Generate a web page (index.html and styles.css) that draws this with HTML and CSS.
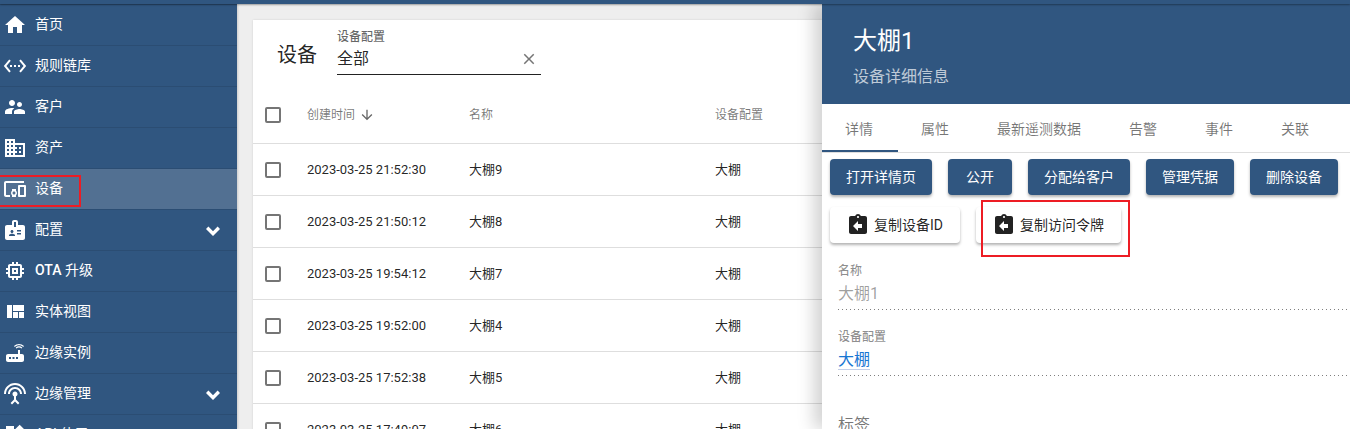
FILE: index.html
```html
<!DOCTYPE html>
<html lang="zh">
<head>
    <meta charset="UTF-8">
    <title>设备</title>
    <link rel="stylesheet" href="styles.css">
</head>
<body>
    <div class="topbar"></div>
    <div class="layout">
        <!-- Side menu -->
        <nav class="sidebar">
            <a class="nav-item"><svg class="nav-icon" viewBox="0 0 24 24"><path d="M10 20v-6h4v6h5v-8h3L12 3 2 12h3v8z"/></svg><span>首页</span></a>
            <a class="nav-item"><svg class="nav-icon" viewBox="0 0 24 24"><path d="M7.77 6.76L6.23 5.48.82 12l5.41 6.52 1.54-1.28L3.42 12l4.35-5.24zM7 13h2v-2H7v2zm10-2h-2v2h2v-2zm-6 2h2v-2h-2v2zm6.77-7.52l-1.54 1.28L20.58 12l-4.35 5.24 1.54 1.28L23.18 12l-5.41-6.52z"/></svg><span>规则链库</span></a>
            <a class="nav-item"><svg class="nav-icon" viewBox="0 0 24 24"><path d="M16.5 12c1.38 0 2.49-1.12 2.49-2.5S17.88 7 16.5 7 14 8.12 14 9.5s1.12 2.5 2.5 2.5zM9 11c1.66 0 2.99-1.34 2.99-3S10.66 5 9 5 6 6.34 6 8s1.34 3 3 3zm7.5 3c-1.83 0-5.5.92-5.5 2.75V19h11v-2.25c0-1.83-3.67-2.75-5.5-2.75zM9 13c-2.33 0-7 1.17-7 3.5V19h7v-2.25c0-.85.33-2.34 2.37-3.47C10.5 13.1 9.66 13 9 13z"/></svg><span>客户</span></a>
            <a class="nav-item"><svg class="nav-icon" viewBox="0 0 24 24"><path d="M12 7V3H2v18h20V7H12zM6 19H4v-2h2v2zm0-4H4v-2h2v2zm0-4H4V9h2v2zm0-4H4V5h2v2zm4 12H8v-2h2v2zm0-4H8v-2h2v2zm0-4H8V9h2v2zm0-4H8V5h2v2zm10 12h-8v-2h2v-2h-2v-2h2v-2h-2V9h8v10zm-2-8h-2v2h2v-2zm0 4h-2v2h2v-2z"/></svg><span>资产</span></a>
            <a class="nav-item active"><svg class="nav-icon" viewBox="0 0 24 24"><path d="M3 6h18V4H3c-1.1 0-2 .9-2 2v12c0 1.1.9 2 2 2h4v-2H3V6zm10 6H9v1.78c-.61.55-1 1.33-1 2.22s.39 1.67 1 2.22V20h4v-1.78c.61-.55 1-1.34 1-2.22s-.39-1.67-1-2.22V12zm-2 5.5c-.83 0-1.5-.67-1.5-1.5s.67-1.5 1.5-1.5 1.5.67 1.5 1.5-.67 1.5-1.5 1.5zM22 8h-6c-.5 0-1 .5-1 1v10c0 .5.5 1 1 1h6c.5 0 1-.5 1-1V9c0-.5-.5-1-1-1zm-1 10h-4v-8h4v8z"/></svg><span>设备</span></a>
            <a class="nav-item"><svg class="nav-icon" viewBox="0 0 24 24"><path d="M20 7h-5V4c0-1.1-.9-2-2-2h-2c-1.1 0-2 .9-2 2v3H4c-1.1 0-2 .9-2 2v11c0 1.1.9 2 2 2h16c1.1 0 2-.9 2-2V9c0-1.1-.9-2-2-2zM9 12c.83 0 1.5.67 1.5 1.5S9.83 15 9 15s-1.5-.67-1.5-1.5S8.17 12 9 12zm3 6H6v-.75c0-1 2-1.5 3-1.5s3 .5 3 1.5V18zm1-9h-2V4h2v5zm5 7.5h-4V15h4v1.5zm0-3h-4V12h4v1.5z"/></svg><span>配置</span><svg class="nav-chevron" viewBox="0 0 24 24"><path d="M7.41 8.59L12 13.17l4.59-4.58L19 11l-7 7-7-7z"/></svg></a>
            <a class="nav-item"><svg class="nav-icon" viewBox="0 0 24 24"><path d="M15 9H9v6h6V9zm-2 4h-2v-2h2v2zm8-2V9h-2V7c0-1.1-.9-2-2-2h-2V3h-2v2h-2V3H9v2H7c-1.1 0-2 .9-2 2v2H3v2h2v2H3v2h2v2c0 1.1.9 2 2 2h2v2h2v-2h2v2h2v-2h2c1.1 0 2-.9 2-2v-2h2v-2h-2v-2h2zm-4 6H7V7h10v10z"/></svg><span><b class="latin">OTA</b> 升级</span></a>
            <a class="nav-item"><svg class="nav-icon" viewBox="0 0 24 24"><path d="M10 18h5v-6h-5v6zm-6 0h5V5H4v13zm12 0h5v-6h-5v6zM10 5v6h11V5H10z"/></svg><span>实体视图</span></a>
            <a class="nav-item"><svg class="nav-icon" viewBox="0 0 24 24"><path d="M20.2 5.9l.8-.8C19.6 3.7 17.8 3 16 3s-3.6.7-5 2.1l.8.8C13 4.8 14.5 4.2 16 4.2s3 .6 4.2 1.7zm-.9.8c-.9-.9-2.1-1.4-3.3-1.4s-2.4.5-3.3 1.4l.8.8c.7-.7 1.6-1 2.5-1 .9 0 1.8.3 2.5 1l.8-.8zM19 13h-2V9h-2v4H5c-1.1 0-2 .9-2 2v4c0 1.1.9 2 2 2h14c1.1 0 2-.9 2-2v-4c0-1.1-.9-2-2-2zM8 18H6v-2h2v2zm3.5 0h-2v-2h2v2zm3.5 0h-2v-2h2v2z"/></svg><span>边缘实例</span></a>
            <a class="nav-item"><svg class="nav-icon" viewBox="0 0 24 24"><path d="M12 5c-3.87 0-7 3.13-7 7h2c0-2.76 2.24-5 5-5s5 2.24 5 5h2c0-3.87-3.13-7-7-7zm1 9.29c.88-.39 1.5-1.26 1.5-2.29 0-1.38-1.12-2.5-2.5-2.5S9.5 10.62 9.5 12c0 1.02.62 1.9 1.5 2.29v3.3L7.59 21 9 22.41l3-3 3 3L16.41 21 13 17.59v-3.3zM12 1C5.93 1 1 5.93 1 12h2c0-4.97 4.03-9 9-9s9 4.03 9 9h2c0-6.07-4.93-11-11-11z"/></svg><span>边缘管理</span><svg class="nav-chevron" viewBox="0 0 24 24"><path d="M7.41 8.59L12 13.17l4.59-4.58L19 11l-7 7-7-7z"/></svg></a>
            <a class="nav-item"><svg class="nav-icon" viewBox="0 0 24 24"><path d="M13 13v8h8v-8h-8zM3 21h8v-8H3v8zM3 3v8h8V3H3zm13.66-1.31L11 7.34 16.66 13l5.66-5.66-5.66-5.65z"/></svg><span>API 使用</span></a>
        </nav>

        <!-- Device table -->
        <main class="content">
            <section class="card">
                <div class="card-head">
                    <h2 class="card-title">设备</h2>
                    <div class="filter">
                        <label class="filter-label">设备配置</label>
                        <div class="filter-value">
                            <span>全部</span>
                            <svg class="filter-clear" viewBox="0 0 24 24"><path d="M19 6.41L17.59 5 12 10.59 6.41 5 5 6.41 10.59 12 5 17.59 6.41 19 12 13.41 17.59 19 19 17.59 13.41 12z"/></svg>
                        </div>
                    </div>
                </div>
                <div class="row row-head">
                    <span class="check"></span>
                    <span class="col-time">创建时间<svg class="sort-icon" viewBox="0 0 24 24"><path d="M20 12l-1.41-1.41L13 16.17V4h-2v12.17l-5.58-5.59L4 12l8 8 8-8z"/></svg></span>
                    <span class="col-name">名称</span>
                    <span class="col-profile">设备配置</span>
                </div>
                <div class="row"><span class="check"></span><span class="col-time">2023-03-25 21:52:30</span><span class="col-name">大棚9</span><span class="col-profile">大棚</span></div>
                <div class="row"><span class="check"></span><span class="col-time">2023-03-25 21:50:12</span><span class="col-name">大棚8</span><span class="col-profile">大棚</span></div>
                <div class="row"><span class="check"></span><span class="col-time">2023-03-25 19:54:12</span><span class="col-name">大棚7</span><span class="col-profile">大棚</span></div>
                <div class="row"><span class="check"></span><span class="col-time">2023-03-25 19:52:00</span><span class="col-name">大棚4</span><span class="col-profile">大棚</span></div>
                <div class="row"><span class="check"></span><span class="col-time">2023-03-25 17:52:38</span><span class="col-name">大棚5</span><span class="col-profile">大棚</span></div>
                <div class="row"><span class="check"></span><span class="col-time">2023-03-25 17:49:07</span><span class="col-name">大棚6</span><span class="col-profile">大棚</span></div>
            </section>
        </main>

        <!-- Device details drawer -->
        <aside class="details">
            <header class="details-head">
                <h1 class="details-title">大棚1</h1>
                <p class="details-sub">设备详细信息</p>
            </header>
            <div class="tabs">
                <span class="tab selected">详情</span>
                <span class="tab">属性</span>
                <span class="tab tab-wide">最新遥测数据</span>
                <span class="tab">告警</span>
                <span class="tab">事件</span>
                <span class="tab">关联</span>
            </div>
            <div class="actions">
                <button class="btn">打开详情页</button>
                <button class="btn">公开</button>
                <button class="btn">分配给客户</button>
                <button class="btn">管理凭据</button>
                <button class="btn">删除设备</button>
            </div>
            <div class="actions actions-copy">
                <button class="btn btn-light"><svg class="btn-icon" viewBox="0 0 24 24"><path d="M19 3h-4.18C14.4 1.84 13.3 1 12 1c-1.3 0-2.4.84-2.82 2H5c-1.1 0-2 .9-2 2v14c0 1.1.9 2 2 2h14c1.1 0 2-.9 2-2V5c0-1.1-.9-2-2-2zm-7 0c.55 0 1 .45 1 1s-.45 1-1 1-1-.45-1-1 .45-1 1-1zm4 12h-4v3l-5-5 5-5v3h4v4z"/></svg>复制设备ID</button>
                <button class="btn btn-light"><svg class="btn-icon" viewBox="0 0 24 24"><path d="M19 3h-4.18C14.4 1.84 13.3 1 12 1c-1.3 0-2.4.84-2.82 2H5c-1.1 0-2 .9-2 2v14c0 1.1.9 2 2 2h14c1.1 0 2-.9 2-2V5c0-1.1-.9-2-2-2zm-7 0c.55 0 1 .45 1 1s-.45 1-1 1-1-.45-1-1 .45-1 1-1zm4 12h-4v3l-5-5 5-5v3h4v4z"/></svg>复制访问令牌</button>
            </div>
            <div class="fields">
                <div class="field">
                    <div class="field-label">名称</div>
                    <div class="field-value">大棚1</div>
                </div>
                <div class="field">
                    <div class="field-label">设备配置</div>
                    <div class="field-value"><a class="field-link">大棚</a></div>
                </div>
                <div class="tags-label">标签</div>
            </div>
        </aside>
    </div>

    <!-- Red annotation boxes drawn over the screenshot -->
    <div class="mark mark-nav"></div>
    <div class="mark mark-token"></div>
</body>
</html>
```

FILE: styles.css
```css
* {
    box-sizing: border-box;
}
html, body {
    height: 100%;
}
body {
    margin: 0;
    height: 429px;
    overflow: hidden;
    position: relative;
    background: #eeeeee;
    font-family: Roboto, "Noto Sans CJK SC", sans-serif;
    font-size: 14px;
    color: rgba(0, 0, 0, 0.87);
}
.topbar {
    height: 4px;
    background: #305680;
    box-shadow: 0 1px 2px rgba(0, 0, 0, 0.35);
    position: relative;
    z-index: 3;
}
.layout {
    display: flex;
    height: 425px;
}

/* side menu */
.sidebar {
    width: 237px;
    flex: none;
    background: #305680;
    box-shadow: 1px 0 2px rgba(0, 0, 0, 0.15);
    overflow: hidden;
}
.nav-item {
    display: flex;
    align-items: center;
    height: 41px;
    padding: 0 16px 0 3px;
    color: #fff;
    line-height: 20px;
    border-top: 1px solid #2b4d73;
}
.nav-item span {
    padding-bottom: 2px;
}
.latin {
    font-weight: 500;
}
.nav-item.active {
    background: #527092;
}
.nav-icon {
    width: 24px;
    height: 24px;
    flex: none;
    margin-right: 8px;
    fill: #fff;
}
.nav-chevron {
    width: 24px;
    height: 24px;
    margin-left: auto;
    margin-right: -4px;
    fill: #fff;
}

/* table card */
.content {
    flex: 1;
    padding: 16px 0 0 16px;
    min-width: 0;
}
.card {
    background: #fff;
    height: 420px;
    overflow: hidden;
    box-shadow: 0 0 2px rgba(0, 0, 0, 0.12);
}
.card-head {
    display: flex;
    align-items: flex-start;
    height: 65px;
    padding: 10px 0 0 24px;
}
.card-title {
    margin: 11px 20px 0 0;
    font-size: 20px;
    font-weight: 400;
    line-height: 28px;
}
.filter {
    width: 204px;
}
.filter-label {
    display: block;
    font-size: 12px;
    font-weight: 500;
    line-height: 14px;
    color: rgba(0, 0, 0, 0.6);
}
.filter-value {
    display: flex;
    align-items: center;
    justify-content: space-between;
    height: 31px;
    font-size: 16px;
    line-height: 24px;
    border-bottom: 1px solid #222;
}
.filter-clear {
    width: 18px;
    height: 18px;
    margin-right: 3px;
    fill: rgba(0, 0, 0, 0.54);
}
.row {
    display: flex;
    align-items: center;
    height: 52px;
    padding-left: 12px;
    border-bottom: 1px solid #dedede;
    font-size: 13px;
    line-height: 20px;
}
.check {
    width: 16px;
    height: 16px;
    flex: none;
    border: 2px solid rgba(0, 0, 0, 0.54);
    border-radius: 2px;
    margin-right: 26px;
}
.col-time {
    width: 162px;
    flex: none;
    display: flex;
    align-items: center;
}
.col-name {
    width: 246px;
    flex: none;
}
.row-head {
    height: 59px;
    padding-top: 2px;
    font-size: 12px;
    color: rgba(0, 0, 0, 0.54);
}
.sort-icon {
    width: 16px;
    height: 16px;
    margin-left: 4px;
    fill: rgba(0, 0, 0, 0.6);
}

/* details drawer */
.details {
    position: absolute;
    top: 4px;
    right: 0;
    width: 528px;
    height: 425px;
    background: #fff;
    overflow: hidden;
    z-index: 2;
    box-shadow: -8px 0 16px rgba(0, 0, 0, 0.18);
}
.details-head {
    height: 100px;
    background: #305680;
    color: #fff;
    padding: 19px 0 0 31px;
}
.details-title {
    margin: 0;
    font-size: 24px;
    font-weight: 400;
    line-height: 36px;
}
.details-sub {
    margin: 8px 0 0;
    font-size: 16px;
    line-height: 20px;
    color: rgba(255, 255, 255, 0.7);
}
.tabs {
    display: flex;
    height: 49px;
    border-bottom: 1px solid #dedede;
}
.tab {
    width: 76px;
    height: 48px;
    padding: 15px 2px 0 0;
    text-align: center;
    line-height: 20px;
    color: rgba(0, 0, 0, 0.54);
}
.tab-wide {
    width: 132px;
}
.tab.selected {
    border-bottom: 2px solid #305680;
}
.actions {
    display: flex;
    gap: 16px;
    padding: 6px 0 0 8px;
}
.actions-copy {
    padding-top: 12px;
}
.btn {
    height: 36px;
    min-width: 64px;
    padding: 0 16px;
    border: 0;
    border-radius: 4px;
    background: #305680;
    color: #fff;
    font: 400 14px/36px Roboto, "Noto Sans CJK SC", sans-serif;
    box-shadow: 0 2px 3px rgba(0, 0, 0, 0.3);
    white-space: nowrap;
}
.btn-light {
    display: flex;
    align-items: center;
    background: #fff;
    color: rgba(0, 0, 0, 0.87);
    padding-right: 17px;
}
.btn-icon {
    width: 24px;
    height: 24px;
    margin-right: 4px;
    fill: #222;
}
.fields {
    padding: 21px 0 0 16px;
}
.field {
    height: 66px;
}
.field-label {
    font-size: 12px;
    line-height: 14px;
    font-weight: 500;
    color: rgba(0, 0, 0, 0.45);
}
.field-value {
    height: 32px;
    padding-top: 4px;
    font-size: 16px;
    line-height: 24px;
    color: rgba(0, 0, 0, 0.38);
    background: linear-gradient(to right, rgba(0, 0, 0, 0.5) 33%, transparent 0) bottom left / 4px 1px repeat-x;
}
.field-link {
    color: #1976d2;
    border-bottom: 1px solid #c3cfe8;
}
.tags-label {
    margin-top: 17px;
    font-size: 16px;
    line-height: 24px;
    color: rgba(0, 0, 0, 0.54);
}

/* annotations */
.mark {
    position: absolute;
    border: 2px solid #ed1c24;
    z-index: 5;
}
.mark-nav {
    left: -2px;
    top: 175px;
    width: 83px;
    height: 32px;
}
.mark-token {
    left: 981px;
    top: 200px;
    width: 149px;
    height: 57px;
}
```
